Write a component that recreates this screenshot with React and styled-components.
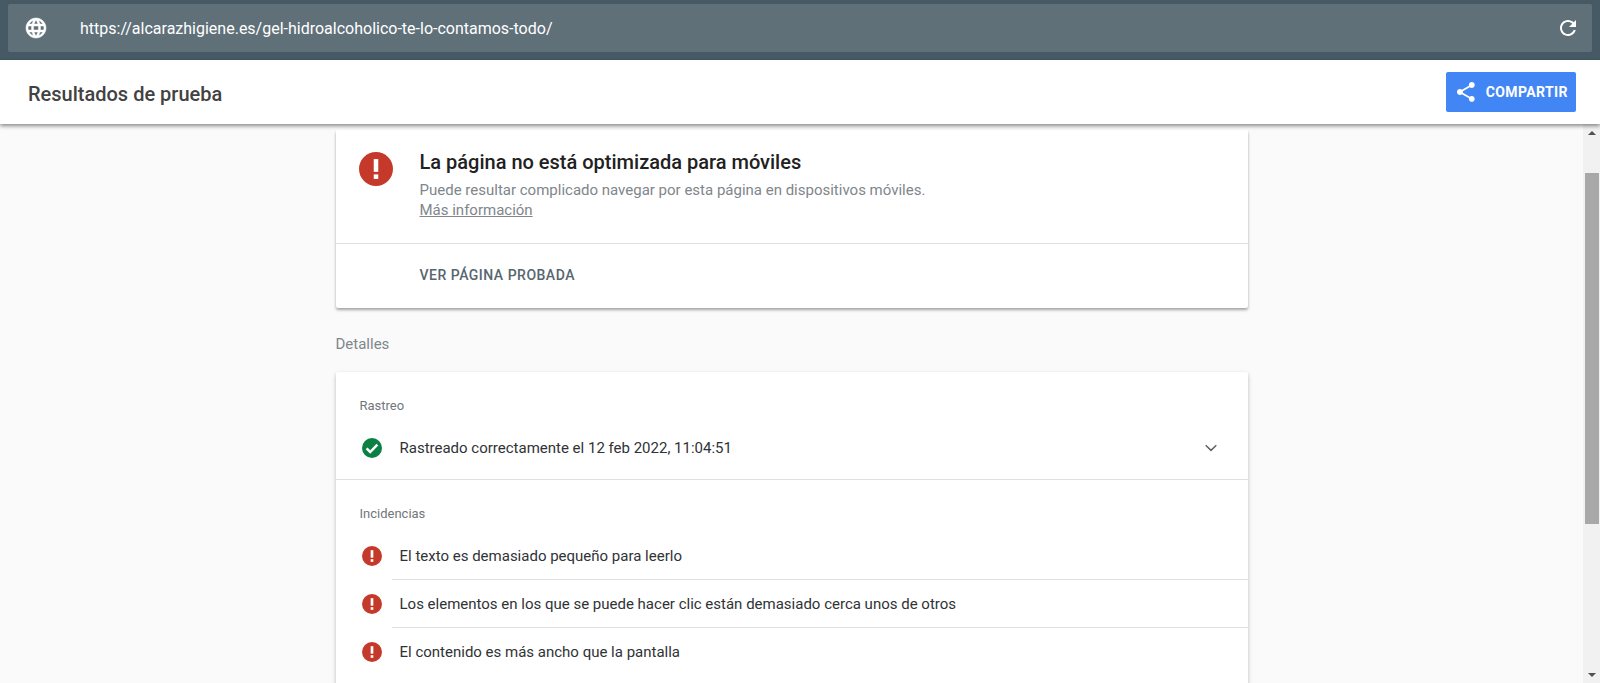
import React from "react";
import styled, { createGlobalStyle } from "styled-components";

const GlobalStyle = createGlobalStyle`
  html, body {
    margin: 0;
    height: 100%;
    overflow: hidden;
    background: #fafafa;
    font-family: Roboto, "Liberation Sans", sans-serif;
  }
  #root { height: 100%; }
`;

const issues = [
  "El texto es demasiado pequeño para leerlo",
  "Los elementos en los que se puede hacer clic están demasiado cerca unos de otros",
  "El contenido es más ancho que la pantalla",
];

const ErrorIcon = ({ size = 24 }) => (
  <svg width={size} height={size} viewBox="0 0 24 24">
    <circle cx="12" cy="12" r="12" fill="#c5392a" />
    <rect x="10.4" y="5" width="3.2" height="9" fill="#fff" />
    <rect x="10.4" y="15.8" width="3.2" height="3.2" fill="#fff" />
  </svg>
);

const CheckIcon = () => (
  <svg width="20" height="20" viewBox="0 0 20 20">
    <circle cx="10" cy="10" r="10" fill="#0b8043" />
    <path d="M4.6 10.4l3.6 3.6 7.2-7.4" fill="none" stroke="#fff" strokeWidth="2.5" />
  </svg>
);

const GlobeIcon = () => (
  <svg width="24" height="24" viewBox="0 0 24 24" fill="#fff">
    <path d="M11.99 2C6.47 2 2 6.48 2 12s4.47 10 9.99 10C17.52 22 22 17.52 22 12S17.52 2 11.99 2zm6.93 6h-2.95c-.32-1.25-.78-2.45-1.38-3.56 1.84.63 3.37 1.91 4.33 3.56zM12 4.04c.83 1.2 1.48 2.53 1.91 3.96h-3.82c.43-1.43 1.08-2.76 1.91-3.96zM4.26 14C4.1 13.36 4 12.69 4 12s.1-1.36.26-2h3.38c-.08.66-.14 1.32-.14 2 0 .68.06 1.34.14 2H4.26zm.82 2h2.95c.32 1.25.78 2.45 1.38 3.56-1.84-.63-3.37-1.9-4.33-3.56zm2.95-8H5.08c.96-1.66 2.49-2.93 4.33-3.56C8.81 5.55 8.35 6.75 8.03 8zM12 19.96c-.83-1.2-1.48-2.53-1.91-3.96h3.82c-.43 1.43-1.08 2.76-1.91 3.96zM14.34 14H9.66c-.09-.66-.16-1.32-.16-2 0-.68.07-1.35.16-2h4.68c.09.65.16 1.32.16 2 0 .68-.07 1.34-.16 2zm.25 5.56c.6-1.11 1.06-2.31 1.38-3.56h2.95c-.96 1.65-2.49 2.93-4.33 3.56zM16.36 14c.08-.66.14-1.32.14-2 0-.68-.06-1.34-.14-2h3.38c.16.64.26 1.31.26 2s-.1 1.36-.26 2h-3.38z" stroke="#fff" strokeWidth="0.5" />
  </svg>
);

const ReloadIcon = () => (
  <svg width="24" height="24" viewBox="0 0 24 24" fill="#fff">
    <path d="M17.65 6.35C16.2 4.9 14.21 4 12 4c-4.42 0-7.99 3.58-7.99 8s3.57 8 7.99 8c3.73 0 6.84-2.55 7.73-6h-2.08c-.82 2.33-3.04 4-5.65 4-3.31 0-6-2.69-6-6s2.69-6 6-6c1.66 0 3.14.69 4.22 1.78L13 11h7V4l-2.35 2.35z" />
  </svg>
);

const ShareIcon = () => (
  <svg width="24" height="24" viewBox="0 0 24 24" fill="#fff">
    <path d="M18 16.08c-.76 0-1.44.3-1.96.77L8.91 12.7c.05-.23.09-.46.09-.7s-.04-.47-.09-.7l7.05-4.11c.54.5 1.25.81 2.04.81 1.66 0 3-1.34 3-3s-1.34-3-3-3-3 1.34-3 3c0 .24.04.47.09.7L8.04 9.81C7.5 9.31 6.79 9 6 9c-1.66 0-3 1.34-3 3s1.34 3 3 3c.79 0 1.5-.31 2.04-.81l7.12 4.16c-.05.21-.08.43-.08.65 0 1.61 1.31 2.92 2.92 2.92 1.61 0 2.92-1.31 2.92-2.92s-1.31-2.92-2.92-2.92z" />
  </svg>
);

const ChevronIcon = () => (
  <svg width="24" height="24" viewBox="0 0 24 24" fill="none">
    <path d="M6.7 9.3l5.3 5.1 5.3-5.1" stroke="#5f6368" strokeWidth="1.5" />
  </svg>
);

const App = () => (
  <Page>
    <GlobalStyle />
    <UrlBar>
      <UrlField>
        <UrlIcon><GlobeIcon /></UrlIcon>
        <UrlText>https://alcarazhigiene.es/gel-hidroalcoholico-te-lo-contamos-todo/</UrlText>
        <ReloadIcon />
      </UrlField>
    </UrlBar>
    <Header>
      <HeaderTitle>Resultados de prueba</HeaderTitle>
      <ShareButton>
        <ShareIcon />
        COMPARTIR
      </ShareButton>
    </Header>
    <Body>
      <Content>
        <SummaryCard>
          <SummaryTop>
            <SummaryIcon><ErrorIcon size={34} /></SummaryIcon>
            <div>
              <SummaryTitle>La página no está optimizada para móviles</SummaryTitle>
              <SummaryText>Puede resultar complicado navegar por esta página en dispositivos móviles.</SummaryText>
              <SummaryLink href="#">Más información</SummaryLink>
            </div>
          </SummaryTop>
          <SummaryAction>VER PÁGINA PROBADA</SummaryAction>
        </SummaryCard>
        <DetailsLabel>Detalles</DetailsLabel>
        <DetailsCard>
          <Section>
            <SectionLabel>Rastreo</SectionLabel>
            <Row>
              <RowIcon><CheckIcon /></RowIcon>
              <RowText>Rastreado correctamente el 12 feb 2022, 11:04:51</RowText>
              <RowChevron><ChevronIcon /></RowChevron>
            </Row>
          </Section>
          <Section $bordered>
            <SectionLabel>Incidencias</SectionLabel>
            {issues.map((text, i) => (
              <Row key={text}>
                <RowIcon><ErrorIcon size={20} /></RowIcon>
                <RowText $divider={i < issues.length - 1}>{text}</RowText>
              </Row>
            ))}
          </Section>
        </DetailsCard>
      </Content>
      <Scrollbar>
        <ScrollArrow $up />
        <ScrollThumb />
        <ScrollArrow />
      </Scrollbar>
    </Body>
  </Page>
);

const Page = styled.div`
  height: 683px;
  display: flex;
  flex-direction: column;
  overflow: hidden;
`;

const UrlBar = styled.div`
  height: 60px;
  box-sizing: border-box;
  padding: 4px 8px 8px 8px;
  background: #455a64;
  flex-shrink: 0;
`;

const UrlField = styled.div`
  height: 48px;
  display: flex;
  align-items: center;
  padding: 0 12px 0 16px;
  background: #5f7079;
  border-radius: 2px;
`;

const UrlIcon = styled.div`
  display: flex;
  margin-right: 32px;
`;

const UrlText = styled.div`
  flex: 1;
  font-size: 16px;
  color: #fff;
`;

const Header = styled.div`
  height: 64px;
  flex-shrink: 0;
  display: flex;
  align-items: center;
  justify-content: space-between;
  padding: 0 24px 0 28px;
  background: #fff;
  box-shadow: 0 2px 4px rgba(0, 0, 0, 0.45);
  position: relative;
  z-index: 2;
`;

const HeaderTitle = styled.div`
  padding-top: 3px;
  font-size: 20px;
  font-weight: 500;
  color: #424242;
`;

const ShareButton = styled.button`
  width: 130px;
  height: 40px;
  display: flex;
  align-items: center;
  gap: 8px;
  padding: 0 8px;
  border: none;
  border-radius: 2px;
  background: #4285f4;
  color: #fff;
  font-family: inherit;
  font-size: 14px;
  font-weight: 700;
  letter-spacing: 0.4px;
  white-space: nowrap;
`;

const Body = styled.div`
  flex: 1;
  min-height: 0;
  display: flex;
`;

const Content = styled.div`
  flex: 1;
  overflow: hidden;
  display: flex;
  flex-direction: column;
  align-items: center;
  padding-top: 6px;
`;

const SummaryCard = styled.div`
  width: 912px;
  flex-shrink: 0;
  background: #fff;
  border-radius: 2px;
  box-shadow: 0 2px 3px rgba(0, 0, 0, 0.35);
`;

const SummaryTop = styled.div`
  height: 114px;
  box-sizing: border-box;
  display: flex;
  padding: 20px 0 0 23px;
  border-bottom: 1px solid #e0e0e0;
`;

const SummaryIcon = styled.div`
  width: 61px;
  display: flex;
  align-items: flex-start;
  padding-top: 2px;
`;

const SummaryTitle = styled.div`
  font-size: 20px;
  font-weight: 500;
  line-height: 24px;
  color: #212121;
`;

const SummaryText = styled.div`
  margin-top: 6px;
  font-size: 15px;
  line-height: 20px;
  color: #80868b;
`;

const SummaryLink = styled.a`
  display: block;
  font-size: 15px;
  line-height: 20px;
  color: #80868b;
`;

const SummaryAction = styled.div`
  height: 64px;
  box-sizing: border-box;
  display: flex;
  align-items: center;
  padding: 0 0 2px 84px;
  font-size: 14px;
  font-weight: 500;
  letter-spacing: 0.5px;
  color: #56666f;
`;

const DetailsLabel = styled.div`
  width: 912px;
  margin-top: 26px;
  height: 20px;
  line-height: 20px;
  font-size: 15px;
  color: #80868b;
`;

const DetailsCard = styled.div`
  width: 912px;
  flex-shrink: 0;
  margin-top: 18px;
  padding-bottom: 24px;
  background: #fff;
  border-radius: 2px;
  box-shadow: 0 2px 4px rgba(0, 0, 0, 0.25);
`;

const Section = styled.div`
  padding-top: 26px;
  padding-bottom: ${(p) => (p.$bordered ? "0" : "7px")};
  border-top: ${(p) => (p.$bordered ? "1px solid #e0e0e0" : "none")};
`;

const SectionLabel = styled.div`
  height: 16px;
  line-height: 16px;
  padding-left: 24px;
  margin-bottom: 10px;
  font-size: 13px;
  color: #70777c;
`;

const Row = styled.div`
  display: flex;
  align-items: stretch;
`;

const RowIcon = styled.div`
  width: 56px;
  box-sizing: border-box;
  flex-shrink: 0;
  display: flex;
  align-items: center;
  padding-left: 26px;
`;

const RowText = styled.div`
  flex: 1;
  height: 48px;
  box-sizing: border-box;
  display: flex;
  align-items: center;
  padding-left: 8px;
  font-size: 15px;
  color: #303336;
  border-bottom: ${(p) => (p.$divider ? "1px solid #e0e0e0" : "none")};
`;

const RowChevron = styled.div`
  width: 49px;
  display: flex;
  align-items: center;
`;

const Scrollbar = styled.div`
  width: 17px;
  flex-shrink: 0;
  display: flex;
  flex-direction: column;
  background: #f1f1f1;
`;

const ScrollArrow = styled.div`
  height: 17px;
  flex-shrink: 0;
  display: flex;
  align-items: center;
  justify-content: center;
  margin-top: ${(p) => (p.$up ? "0" : "auto")};

  &::before {
    content: "";
    border-left: 4px solid transparent;
    border-right: 4px solid transparent;
    border-${(p) => (p.$up ? "bottom" : "top")}: 4px solid #505050;
  }
`;

const ScrollThumb = styled.div`
  height: 351px;
  margin: 32px 1px 0 2px;
  background: #a8a8a8;
`;

export default App;
